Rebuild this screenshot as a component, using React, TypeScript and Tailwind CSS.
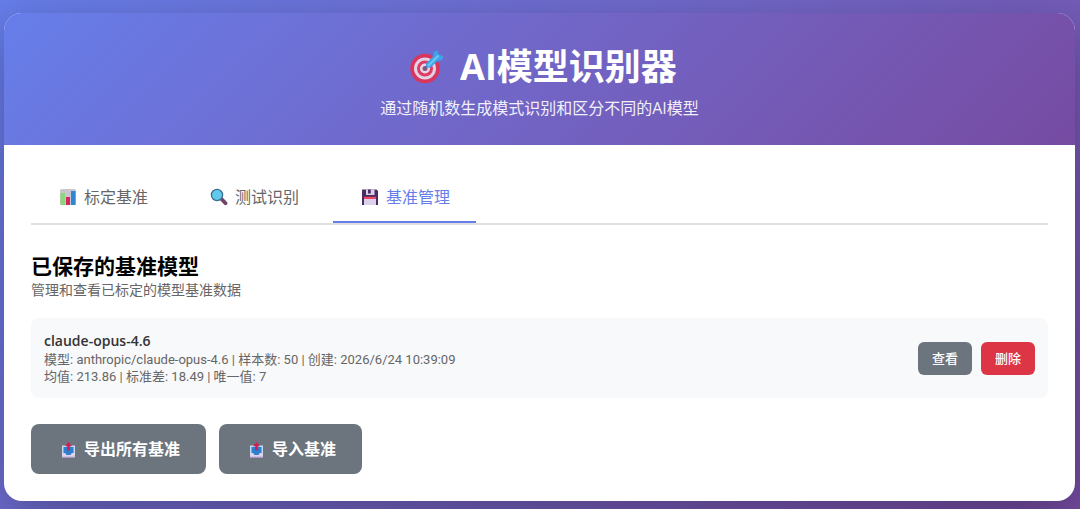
import { useState } from 'react';
import clsx from 'clsx';

function TargetIcon() {
  return (
    <svg viewBox="-7 0 42 36" className="h-9 w-[42px] shrink-0" aria-hidden="true">
      <circle cx="16" cy="19.5" r="14.8" fill="#d9365e" />
      <circle cx="16" cy="19.5" r="11" fill="#e3d3e6" />
      <circle cx="16" cy="19.5" r="8" fill="#dd3c63" />
      <circle cx="16" cy="19.5" r="5" fill="#e6d6e8" />
      <circle cx="16" cy="19.5" r="2.5" fill="#a04a78" />
      <path d="M15.5 20 20 15" stroke="#5d6a86" strokeWidth="2.4" strokeLinecap="round" />
      <path d="M17 14.5 24.5 7 25 3 28 1.2 30 5.5 34.5 7.5 33 11 28.5 12 21.5 18.5 17.5 18.5Z" fill="#3da2ea" />
      <path d="M19 17 29.5 6.5" stroke="#67c6f5" strokeWidth="2.4" />
    </svg>
  );
}

function ChartIcon() {
  return (
    <svg viewBox="-1 0 20 20" className="h-5 w-5 shrink-0" aria-hidden="true">
      <rect x="2" y="2" width="16" height="16" rx="1.5" fill="#c9c6cf" />
      <rect x="2.5" y="6" width="4.5" height="12" fill="#8ed67c" />
      <rect x="8" y="10" width="4" height="8" fill="#cf2862" />
      <rect x="13" y="4" width="4.5" height="14" fill="#2f86d2" />
    </svg>
  );
}

function SearchIcon() {
  return (
    <svg viewBox="-1 0 20 20" className="h-5 w-5 shrink-0" aria-hidden="true">
      <path d="m12.5 12 4 4.2" stroke="#6c4566" strokeWidth="3.8" strokeLinecap="round" />
      <circle cx="8" cy="8" r="5.6" fill="#5fcbe8" stroke="#3c6c93" strokeWidth="1.3" />
    </svg>
  );
}

function SaveIcon() {
  return (
    <svg viewBox="-1 0 20 20" className="h-5 w-5 shrink-0" aria-hidden="true">
      <path d="M2 2.5h14.5L18 4v14H2Z" fill="#4a2b63" />
      <path d="M6 2.5h8.5v5.5H6Z" fill="#d9d0e6" />
      <path d="M8 2.5h2.8v4H8Z" fill="#4a2b63" />
      <path d="M4 10.5h12V18H4Z" fill="#dcd0ea" />
      <path d="M4 9.8h12V12H4Z" fill="#ee4668" />
    </svg>
  );
}

function OutboxIcon() {
  return (
    <svg viewBox="-1 -1 20 20" className="h-5 w-5 shrink-0" aria-hidden="true">
      <path d="M4 5.5h13V15H4Z" fill="#c6d8ee" />
      <path d="M5.5 7h10v8h-10Z" fill="#2d7fd0" />
      <path d="M4 13h3.2l1.3 2h4l1.3-2H17v5H4Z" fill="#ddd3ea" />
      <path d="M4 16.7h13V18H4Z" fill="#a996c4" />
      <path d="M10.5 2 14 6.2h-2.2v4.3H9.2V6.2H7Z" fill="#d01f57" />
    </svg>
  );
}

const tabs = [
  { id: 'calibrate', label: '标定基准', icon: ChartIcon },
  { id: 'test', label: '测试识别', icon: SearchIcon },
  { id: 'manage', label: '基准管理', icon: SaveIcon },
];

const baselines = [
  {
    name: 'claude-opus-4.6',
    model: 'anthropic/claude-opus-4.6',
    samples: 50,
    created: '2026/6/24 10:39:09',
    mean: '213.86',
    stdDev: '18.49',
    unique: 7,
  },
];

export default function App() {
  const [activeTab, setActiveTab] = useState('manage');

  return (
    <div className="min-h-screen bg-linear-135 from-[#667eea] to-[#764ba2] pt-[13px] pr-[5px] pb-2 pl-1 font-['Open_Sans','Noto_Sans_CJK_SC',sans-serif]">
      <div className="overflow-hidden rounded-[18px] bg-white shadow-[0_18px_54px_rgba(0,0,0,0.3)]">
        <header className="flex flex-col items-center gap-[3px] bg-linear-135 from-[#667eea] to-[#764ba2] px-7 pt-7 pb-[25px] text-white">
          <h1 className="flex items-center gap-4 text-4xl leading-[52px] font-bold">
            <TargetIcon />
            AI模型识别器
          </h1>
          <p className="text-base leading-6 opacity-90">通过随机数生成模式识别和区分不同的AI模型</p>
        </header>

        <main className="p-[27px]">
          <nav className="mb-[27px] flex gap-2 border-b-2 border-[#e0e0e0]">
            {tabs.map((tab) => (
              <button
                key={tab.id}
                onClick={() => setActiveTab(tab.id)}
                className={clsx(
                  'flex cursor-pointer items-center gap-[7px] border-b-2 px-[26px] pt-[13px] pb-3 text-base leading-6',
                  activeTab === tab.id ? 'border-[#667eea] text-[#667eea]' : 'border-transparent text-[#666]'
                )}
              >
                <tab.icon />
                {tab.label}
              </button>
            ))}
          </nav>

          <h2 className="text-[21px] leading-7 font-bold text-black">已保存的基准模型</h2>
          <p className="text-sm leading-5 text-[#666]">管理和查看已标定的模型基准数据</p>

          <ul className="mt-[18px] mb-[26px]">
            {baselines.map((item) => (
              <li
                key={item.name}
                className="flex items-center justify-between gap-4 rounded-lg bg-[#f8f9fa] p-[13px]"
              >
                <div className="font-['Roboto','Noto_Sans_CJK_SC',sans-serif] text-[13px] leading-[17px] text-[#666]">
                  <h3 className="font-['Open_Sans',sans-serif] text-sm leading-5 font-semibold text-[#333]">
                    {item.name}
                  </h3>
                  <p>
                    模型: {item.model} | 样本数: {item.samples} | 创建: {item.created}
                  </p>
                  <p>
                    均值: {item.mean} | 标准差: {item.stdDev} | 唯一值: {item.unique}
                  </p>
                </div>
                <div className="flex gap-[9px] text-[13px] leading-[17px] font-medium text-white">
                  <button className="cursor-pointer rounded-md bg-[#6c757d] px-[14px] py-2">查看</button>
                  <button className="cursor-pointer rounded-md bg-[#dc3545] px-[14px] py-2">删除</button>
                </div>
              </li>
            ))}
          </ul>

          <div className="flex flex-wrap gap-[13px] text-base leading-6 font-bold text-white">
            <button className="flex cursor-pointer items-center gap-[7px] rounded-lg bg-[#6c757d] px-[26px] py-[13px]">
              <OutboxIcon />
              导出所有基准
            </button>
            <button className="flex cursor-pointer items-center gap-[7px] rounded-lg bg-[#6c757d] px-[26px] py-[13px]">
              <OutboxIcon />
              导入基准
            </button>
          </div>
        </main>
      </div>
    </div>
  );
}
